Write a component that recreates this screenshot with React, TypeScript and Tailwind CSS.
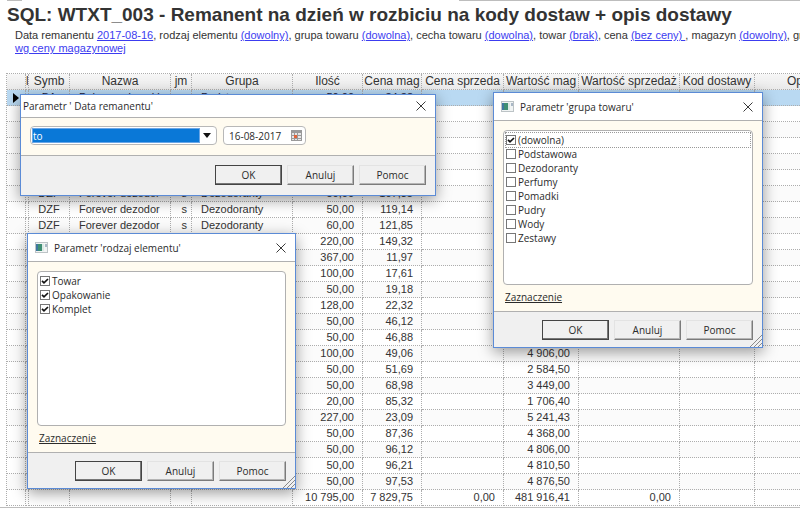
import { ReactNode } from 'react';

type Row = {
  symbol?: string;
  name?: string;
  unit?: string;
  group?: string;
  qty?: string;
  price?: string;
  value?: string;
};

const columns = [
  { id: 'marker', label: '', width: 'w-[19px]' },
  { id: 'lp', label: 'l', width: 'w-[3px]' },
  { id: 'symbol', label: 'Symb', width: 'w-[41px]' },
  { id: 'name', label: 'Nazwa', width: 'w-[101px]' },
  { id: 'unit', label: 'jm', width: 'w-[21px]' },
  { id: 'group', label: 'Grupa', width: 'w-[101px]' },
  { id: 'qty', label: 'Ilość', width: 'w-[70px]' },
  { id: 'price', label: 'Cena mag', width: 'w-[59px]' },
  { id: 'salePrice', label: 'Cena sprzeda', width: 'w-[82px]' },
  { id: 'value', label: 'Wartość mag', width: 'w-[75px]' },
  { id: 'saleValue', label: 'Wartość sprzedaż', width: 'w-[101px]' },
  { id: 'code', label: 'Kod dostawy', width: 'w-[75px]' },
  { id: 'desc', label: 'Opis dostawy', width: '' },
];

const rows: Row[] = [
  { symbol: 'BA', name: 'Pokrowe damski', group: 'Podstawowa', qty: '50,00', price: '34,38', value: '1 719,00' },
  {},
  {},
  {},
  {},
  {},
  { symbol: 'DZF', name: 'Forever dezodor', unit: 's', group: 'Dezodoranty', qty: '50,00', price: '107,35' },
  { symbol: 'DZF', name: 'Forever dezodor', unit: 's', group: 'Dezodoranty', qty: '50,00', price: '119,14' },
  { symbol: 'DZF', name: 'Forever dezodor', unit: 's', group: 'Dezodoranty', qty: '60,00', price: '121,85' },
  { qty: '220,00', price: '149,32' },
  { qty: '367,00', price: '11,97' },
  { qty: '100,00', price: '17,61' },
  { qty: '50,00', price: '19,18' },
  { qty: '128,00', price: '22,32' },
  { qty: '50,00', price: '46,12' },
  { qty: '50,00', price: '46,88' },
  { qty: '100,00', price: '49,06', value: '4 906,00' },
  { qty: '50,00', price: '51,69', value: '2 584,50' },
  { qty: '50,00', price: '68,98', value: '3 449,00' },
  { qty: '20,00', price: '85,32', value: '1 706,40' },
  { qty: '227,00', price: '23,09', value: '5 241,43' },
  { qty: '50,00', price: '87,36', value: '4 368,00' },
  { qty: '50,00', price: '96,12', value: '4 806,00' },
  { qty: '50,00', price: '96,21', value: '4 810,50' },
  { qty: '50,00', price: '97,53', value: '4 876,50' },
];

const filters = [
  { label: 'Data remanentu', value: '2017-08-16', after: ', ' },
  { label: 'rodzaj elementu', value: '(dowolny)', after: ', ' },
  { label: 'grupa towaru', value: '(dowolna)', after: ', ' },
  { label: 'cecha towaru', value: '(dowolna)', after: ', ' },
  { label: 'towar', value: '(brak)', after: ', ' },
  { label: 'cena', value: '(bez ceny) ', after: ', ' },
  { label: 'magazyn', value: '(dowolny)', after: ', grupa' },
];

const elementTypes = ['Towar', 'Opakowanie', 'Komplet'];
const productGroups = ['(dowolna)', 'Podstawowa', 'Dezodoranty', 'Perfumy', 'Pomadki', 'Pudry', 'Wody', 'Zestawy'];

const cell = 'h-4 overflow-hidden whitespace-nowrap border-b border-r border-dotted border-[#adadad] p-0 leading-[15px]';
const number = `${cell} pr-2 text-right`;

function WindowIcon() {
  return (
    <svg width="13" height="11" viewBox="0 0 13 11" aria-hidden="true">
      <rect x="0.5" y="0.5" width="12" height="10" fill="#f1f4f4" stroke="#bcc3c6" />
      <rect x="1" y="2" width="3" height="7" fill="#3f78a0" />
      <rect x="3" y="2" width="4" height="7" fill="#3f8f74" />
      <rect x="7" y="2" width="2" height="7" fill="#dbe9e4" />
      <rect x="10" y="2" width="2" height="3" fill="#a9b7c6" />
    </svg>
  );
}

function CloseIcon() {
  return (
    <svg width="10" height="10" viewBox="0 0 10 10" aria-hidden="true">
      <path d="M0.5 0.5l9 9M9.5 0.5l-9 9" stroke="#3a3a3a" strokeWidth="1" fill="none" />
    </svg>
  );
}

function CalendarIcon() {
  return (
    <svg width="11" height="11" viewBox="0 0 11 11" aria-hidden="true">
      <rect x="0" y="0" width="11" height="11" fill="#9a9a9a" />
      <path d="M1 3h2v2H1zM4 3h2v2H4zM7 3h3v2H7zM1 6h2v2H1zM7 6h3v2H7zM1 9h2v1H1zM4 9h2v1H4zM7 9h3v1H7z" fill="#e6e6e6" />
      <rect x="3" y="5" width="3" height="3" fill="#e0633a" />
    </svg>
  );
}

function ResizeGrip() {
  return (
    <svg className="absolute right-0 bottom-0" width="13" height="12" viewBox="0 0 13 12" aria-hidden="true">
      <path d="M1 12L13 0M5 12L13 4M9 12L13 8" stroke="#8a8a8a" strokeWidth="1" fill="none" />
    </svg>
  );
}

function DialogButtons() {
  const plain =
    'h-5 w-[67px] border border-t-[#e3e3e3] border-l-[#e3e3e3] border-r-[#7b7b7b] border-b-[#7b7b7b] bg-[#f0f0f0] leading-4 shadow-[inset_-1px_-1px_0_#b5b5b5]';
  return (
    <>
      <button type="button" className="h-5 w-[67px] border border-[#444] bg-[#f0f0f0] leading-4 shadow-[inset_-1px_-1px_0_#777]">
        OK
      </button>
      <button type="button" className={plain}>Anuluj</button>
      <button type="button" className={plain}>Pomoc</button>
    </>
  );
}

type DialogProps = {
  title: string;
  place: string;
  tall?: boolean;
  children: ReactNode;
};

function Dialog({ title, place, tall, children }: DialogProps) {
  return (
    <section
      role="dialog"
      aria-label={title}
      className={`absolute flex flex-col border border-[#5b8bd6] bg-[#f0f0f0] font-['Open_Sans',sans-serif] text-[10px] text-[#2b2b2b] shadow-[0_4px_14px_rgba(0,0,0,0.4)] ${place}`}
    >
      <header className={`flex shrink-0 items-center bg-white ${tall ? 'h-[27px] gap-1.5 pr-[9px] pl-[7px]' : 'h-[22px] pr-[9px] pl-0.5'}`}>
        {tall && <WindowIcon />}
        <h2 className="flex-1 leading-4">{title}</h2>
        <button type="button" aria-label="Zamknij">
          <CloseIcon />
        </button>
      </header>
      <div className="flex flex-1 flex-col border-y border-[#b0b0b0] bg-[#fffbf0]">{children}</div>
      <footer className={`flex shrink-0 justify-end gap-[5px] pr-[9px] ${tall ? 'h-[35px] pt-2' : 'h-[39px] pt-[9px]'}`}>
        <DialogButtons />
      </footer>
      {tall && <ResizeGrip />}
    </section>
  );
}

type CheckListProps = {
  items: string[];
  checked: string[];
  focused?: string;
};

function CheckList({ items, checked, focused }: CheckListProps) {
  return (
    <>
      <ul className="mx-[9px] mt-[9px] flex-1 rounded-sm border border-[#b0b0b0] bg-white p-0.5">
        {items.map((item) => (
          <li key={item} className={item === focused ? 'outline outline-dotted outline-[#999]' : ''}>
            <label className="flex h-[14px] items-center gap-0.5 leading-[14px]">
              <span className="grid">
                <input
                  type="checkbox"
                  defaultChecked={checked.includes(item)}
                  className="peer col-start-1 row-start-1 size-[10px] appearance-none border border-[#777] bg-white"
                />
                <svg className="pointer-events-none col-start-1 row-start-1 hidden peer-checked:block" width="10" height="10" viewBox="0 0 10 10" aria-hidden="true">
                  <path d="M2 4.8l2 2L8 3" stroke="#111" strokeWidth="1.7" fill="none" />
                </svg>
              </span>
              {item}
            </label>
          </li>
        ))}
      </ul>
      <a href="#zaznaczenie" className="mt-1 mb-1.5 ml-[11px] self-start leading-4 underline">
        Zaznaczenie
      </a>
    </>
  );
}

function DateFields() {
  return (
    <div className="flex gap-1.5 px-[9px] pt-2">
      <div className="flex h-[19px] w-[187px] items-center rounded-sm border border-[#b8b8b8] bg-white pr-[5px] pl-px">
        <select aria-label="Zakres" className="h-[15px] w-[168px] appearance-none border border-[#6aa6e6] bg-[#0a78d7] leading-3 text-white">
          <option>to</option>
        </select>
        <svg className="ml-auto" width="8" height="5" viewBox="0 0 8 5" aria-hidden="true">
          <path d="M0 0h8L4 5z" fill="#111" />
        </svg>
      </div>
      <div className="flex h-[19px] w-[83px] items-center justify-between rounded-sm border border-[#b8b8b8] bg-white pr-[3px] pl-[5px]">
        <input type="text" aria-label="Data" defaultValue="16-08-2017" className="w-[58px] leading-4" />
        <button type="button" aria-label="Kalendarz">
          <CalendarIcon />
        </button>
      </div>
    </div>
  );
}

export default function App() {
  return (
    <main className="relative overflow-hidden border-b border-[#bdbdbd] bg-white pb-px font-['Liberation_Sans',Arial,sans-serif] text-[#333]">
      <div className="flex h-px justify-between pl-[7px]">
        <div className="w-[15px] bg-[#bdbdbd]"></div>
        <div className="w-[43%] bg-[#bdbdbd]"></div>
      </div>
      <div className="px-[7px] pt-[3px]">
        <h1 className="text-[19px] leading-[22px] font-bold whitespace-nowrap">
          SQL: WTXT_003 - Remanent na dzień w rozbiciu na kody dostaw + opis dostawy
        </h1>
      </div>
      <div className="pt-[3px] pl-[15px] text-[11px] leading-[13px]">
        <p className="whitespace-nowrap">
          {filters.map((f, i) => (
            <span key={i}>
              {f.label} <a href="#filtr" className="text-[#3c3cf0] underline">{f.value}</a>
              {f.after}
            </span>
          ))}
        </p>
        <p>
          <a href="#cena" className="text-[#3c3cf0] underline">wg ceny magazynowej</a>
        </p>
      </div>
      <div className="mt-[18px] ml-1.5 overflow-hidden">
        <table className="w-full min-w-[886px] table-fixed border-separate border-spacing-0 border-t border-l border-dotted border-[#adadad] text-[11px]">
          <thead>
            <tr className="bg-linear-to-b from-[#f7f7f7] to-[#e9e9e9] text-[12px]">
              {columns.map((c) => (
                <th key={c.id} className={`${cell} ${c.width} text-center font-normal`}>{c.label}</th>
              ))}
            </tr>
          </thead>
          <tbody>
            {rows.map((r, i) => (
              <tr key={i} className={i === 0 ? 'bg-[#b9d9f2] text-[#1c1c3c]' : 'odd:bg-[#fbfbfb] even:bg-white'}>
                <td className={cell}>
                  {i === 0 && (
                    <svg className="ml-1.5" width="6" height="10" viewBox="0 0 6 10" aria-label="Bieżący wiersz">
                      <path d="M0 0l6 5-6 5z" fill="#000" />
                    </svg>
                  )}
                </td>
                <td className={cell}></td>
                <td className={`${cell} text-center`}>{r.symbol}</td>
                <td className={`${cell} pl-[9px]`}>{r.name}</td>
                <td className={`${cell} pr-1 text-right`}>{r.unit}</td>
                <td className={`${cell} pl-[9px]`}>{r.group}</td>
                <td className={number}>{r.qty}</td>
                <td className={number}>{r.price}</td>
                <td className={cell}></td>
                <td className={`${number} ${i === 0 ? 'font-bold' : ''}`}>{r.value}</td>
                <td className={cell}></td>
                <td className={cell}></td>
                <td className={cell}></td>
              </tr>
            ))}
          </tbody>
          <tfoot>
            <tr>
              <td className={cell}></td>
              <td className={cell}></td>
              <td className={cell}></td>
              <td className={cell}></td>
              <td className={cell}></td>
              <td className={cell}></td>
              <td className={number}>10 795,00</td>
              <td className={number}>7 829,75</td>
              <td className={number}>0,00</td>
              <td className={number}>481 916,41</td>
              <td className={number}>0,00</td>
              <td className={cell}></td>
              <td className={cell}></td>
            </tr>
          </tfoot>
        </table>
      </div>
      <Dialog title="Parametr ' Data remanentu'" place="top-[94px] left-[20px] h-[102px] w-[416px]">
        <DateFields />
      </Dialog>
      <Dialog title="Parametr 'rodzaj elementu'" place="top-[233px] left-[27px] h-[256px] w-[269px]" tall>
        <CheckList items={elementTypes} checked={elementTypes} />
      </Dialog>
      <Dialog title="Parametr 'grupa towaru'" place="top-[92px] left-[493px] h-[256px] w-[270px]" tall>
        <CheckList items={productGroups} checked={['(dowolna)']} focused="(dowolna)" />
      </Dialog>
    </main>
  );
}
